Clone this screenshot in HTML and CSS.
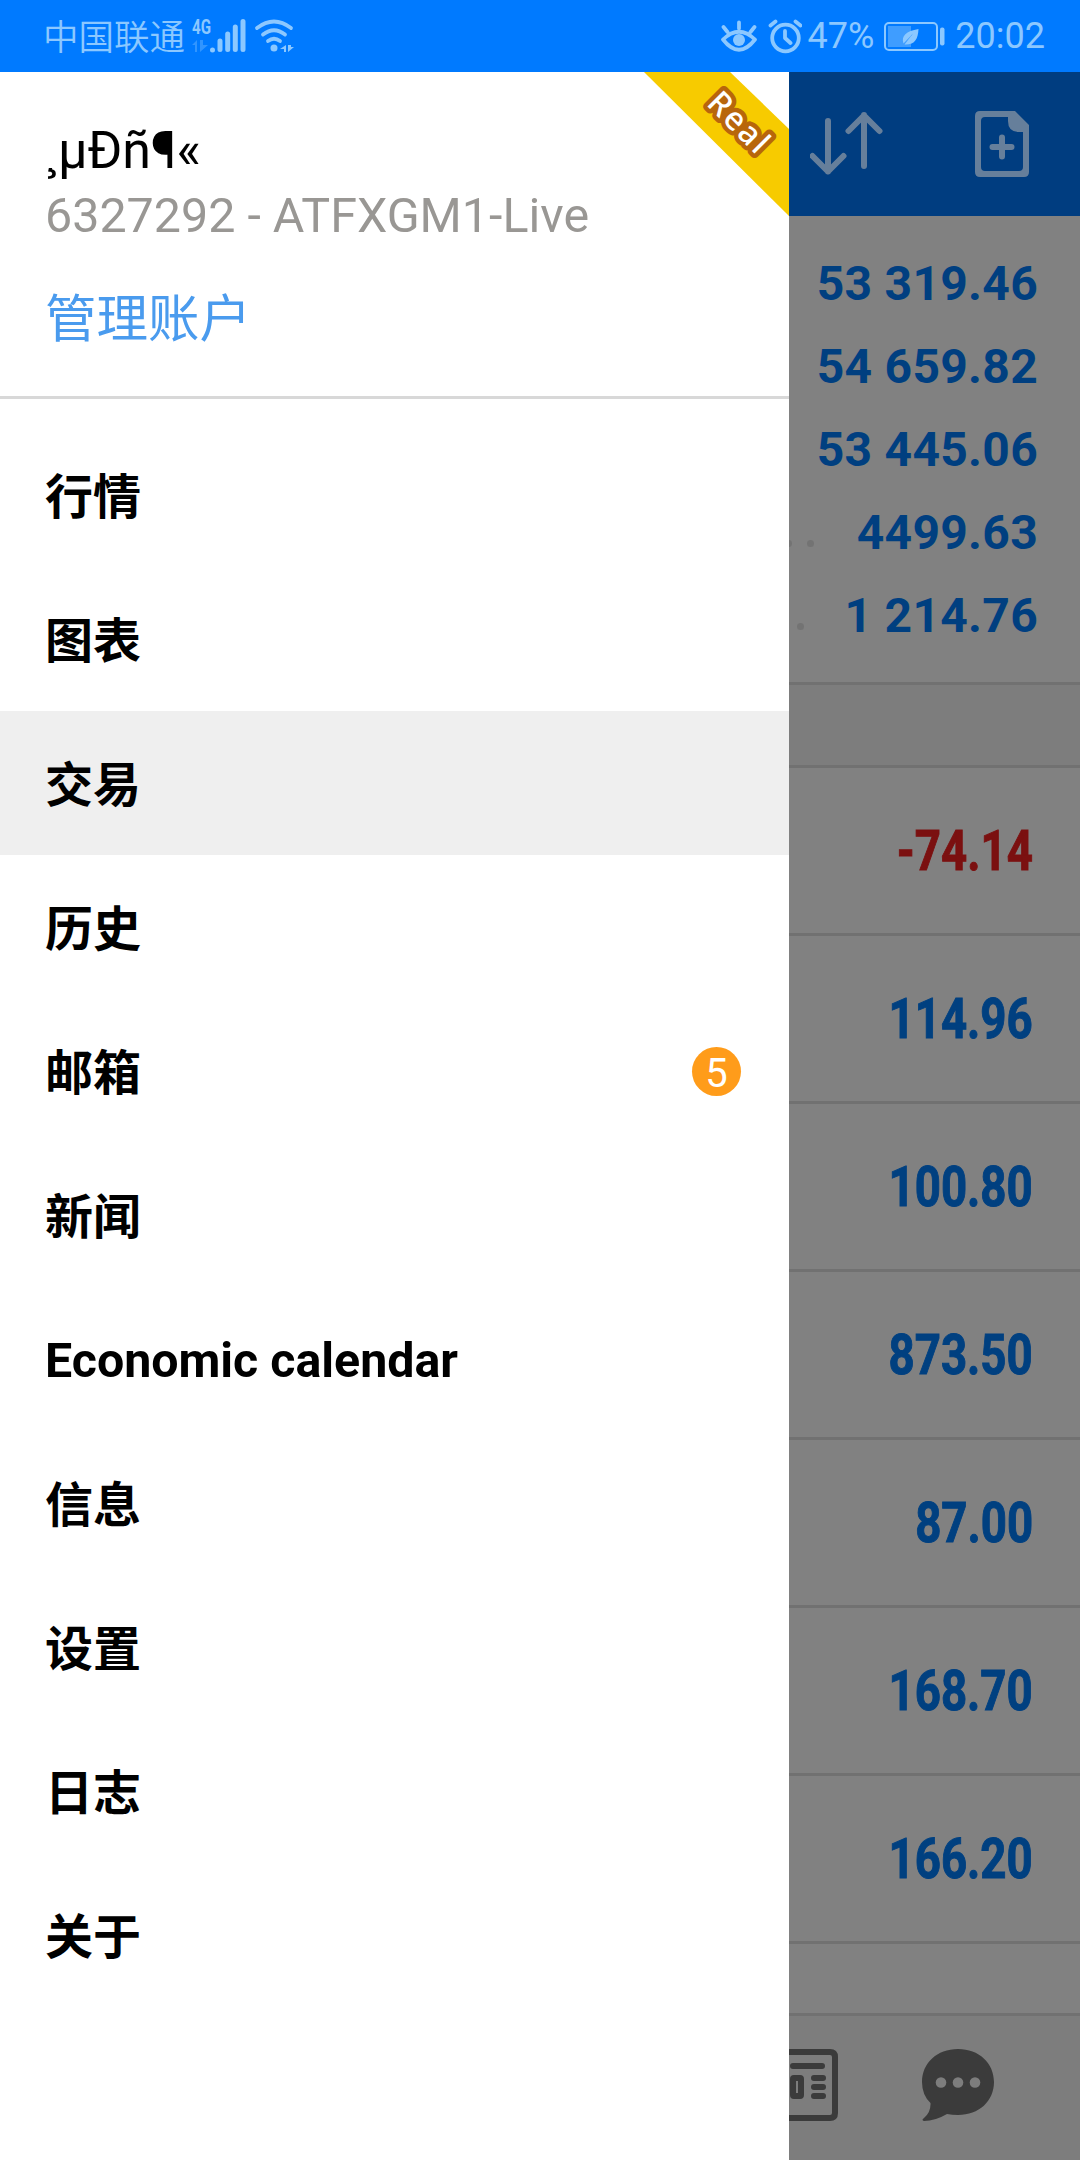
FILE: index.html
```
<!DOCTYPE html>
<html lang="zh-CN">
<head>
  <meta charset="UTF-8">
  <title>交易</title>
  <link rel="stylesheet" href="styles.css">
</head>
<body>
  <header class="status">
    <span class="carrier">中国联通</span>
    <svg class="signal" width="56" height="72" viewBox="190 0 56 72">
      <text x="192" y="33.5" textLength="19" lengthAdjust="spacingAndGlyphs" class="net">4G</text>
      <path class="faint" d="M197 40v12h-2v-7h-3zM200 40v12l8-7h-5v-5z"/>
      <path class="bars" d="M212.500 50v0M220 41v8.500M227.700 34v15.500M235.300 27v22.500M243 21.500v28"/>
    </svg>
    <svg class="wifi" width="42" height="72" viewBox="253 0 42 72">
      <path class="line" d="M257 28Q274 15 291 28M263 34.500Q274 26 285 34.500M268 41Q274 36.500 280 41"/>
      <circle cx="274" cy="48" r="3.500"/>
      <path d="M286 45v7h-2v-3h-4zM288 45v7l6-5h-3v-2z"/>
    </svg>
    <div class="status-right">
      <svg class="eye" width="36" height="72" viewBox="721 0 36 72">
        <path class="line" d="M723 39.500Q739 24 755 39.500Q739 60 723 39.500zM739 22.500v6M723.500 27l4 5M754.500 27l-4 5"/>
        <circle cx="739" cy="40" r="6"/>
      </svg>
      <svg class="alarm" width="34" height="72" viewBox="768 0 34 72">
        <circle class="line" cx="785.500" cy="38" r="13.300"/>
        <path class="line" d="M785 31v7l5.500 5M770.500 25.500l5-4M800.500 25.500l-5-4"/>
      </svg>
      <span class="percent">47%</span>
      <svg class="battery" width="62" height="72" viewBox="883 0 62 72">
        <rect class="frame" x="885" y="23" width="52" height="27" rx="4"/>
        <rect class="level" x="888" y="26" width="23" height="21"/>
        <rect x="940" y="27.500" width="4.500" height="18" rx="2"/>
        <path d="M918.500 29C906 31 901 36 903.500 43.500L913 33.500L904.500 44.500C915 45 918 39 918.500 29z"/>
      </svg>
      <span>20:02</span>
    </div>
  </header>

  <div class="screen">
    <aside class="drawer">
      <svg class="ribbon" width="145" height="144" viewBox="0 0 145 144">
        <path d="M0 0H86L145 57V144z"/>
        <text transform="translate(61.500 32.500) rotate(45)" textLength="72">Real</text>
      </svg>
      <div class="account">
        <div class="name">¸µÐñ¶«</div>
        <div class="login">6327292 - ATFXGM1-Live</div>
        <a class="manage">管理账户</a>
      </div>
      <nav class="menu">
        <a>行情</a>
        <a>图表</a>
        <a class="active">交易</a>
        <a>历史</a>
        <a>邮箱 <span class="badge">5</span></a>
        <a>新闻</a>
        <a class="latin">Economic calendar</a>
        <a>信息</a>
        <a>设置</a>
        <a>日志</a>
        <a>关于</a>
      </nav>
    </aside>

    <main class="trade">
      <div class="toolbar">
        <svg class="sort" width="74" height="68" viewBox="810 110 74 68">
          <path d="M828 121v50.500M812.500 156l15.500 15.500l15.500-15.500M864 166v-51M848.500 131l15.500-15.500l15.500 15.500"/>
        </svg>
        <svg class="new-order" width="54" height="66" viewBox="975 111 54 66">
          <path class="sheet" fill-rule="evenodd" d="M980 111h35l14 14v47q0 5-5 5h-44q-5 0-5-5v-56q0-5 5-5zM985 117q-4 0-4 4v46q0 4 4 4h34q4 0 4-4v-35h-4q-11 0-11-11v-4z"/>
          <path class="plus" d="M992.500 147h19M1002 137.500v19"/>
        </svg>
      </div>
      <div class="summary">
        <div>53 319.46</div>
        <div>54 659.82</div>
        <div>53 445.06</div>
        <div><span class="dots"><i></i><i></i></span>4499.63</div>
        <div><span class="dots last"><i></i></span>1 214.76</div>
      </div>
      <div class="section"></div>
      <div class="positions">
        <div class="loss"><span>-74.14</span></div>
        <div><span>114.96</span></div>
        <div><span>100.80</span></div>
        <div><span>873.50</span></div>
        <div><span>87.00</span></div>
        <div><span>168.70</span></div>
        <div><span>166.20</span></div>
      </div>
      <div class="tabs">
        <svg width="49" height="72" viewBox="789 2049 49 72">
          <path class="page" d="M780 2052h50q5 0 5 5v56q0 5-5 5h-50"/>
          <path class="page" d="M793 2066h29M814 2078h9M814 2087h9M814 2096h9"/>
          <rect class="page" x="793" y="2078" width="8" height="18" rx="1"/>
        </svg>
        <svg class="chat" width="72" height="72" viewBox="0 0 72 72">
          <path d="M36 0C57 0 72 14 72 33C72 52 57 66 36 66Q30 66 25 65Q13 72 2 72Q-1 71 2 69Q9 63 8.500 54Q0 46 0 33C0 14 15 0 36 0z"/>
          <circle cx="19" cy="33.500" r="5.300"/>
          <circle cx="36" cy="33.500" r="5.300"/>
          <circle cx="53" cy="33.500" r="5.300"/>
        </svg>
      </div>
    </main>
  </div>
</body>
</html>
```
FILE: styles.css
```
* {
  box-sizing: border-box;
}
body {
  margin: 0;
  width: 1080px;
  height: 2160px;
  overflow: hidden;
  background-color: #fff;
  font-family: Roboto, "Noto Sans CJK SC", sans-serif;
}
svg {
  display: block;
  flex: none;
}

/* status bar */
.status {
  display: flex;
  align-items: center;
  height: 72px;
  padding: 0 35px 0 43px;
  background-color: #007aff;
  color: #8cc8ff;
  fill: #8cc8ff;
  font-size: 36px;
}
.carrier {
  width: 147px;
  padding-top: 3px;
  font-size: 35.5px;
  font-weight: 350;
  line-height: 72px;
}
.net {
  font-size: 21px;
  font-weight: bold;
}
.faint {
  opacity: 0.35;
}
.bars,
.line {
  fill: none;
  stroke: #8cc8ff;
  stroke-width: 5;
  stroke-linecap: round;
  stroke-linejoin: round;
}
.line {
  stroke-width: 3.8;
}
.wifi {
  margin-left: 7px;
}
.status-right {
  display: flex;
  align-items: center;
  margin-left: auto;
  line-height: 76px;
}
.alarm {
  margin-left: 11px;
}
.percent {
  margin: 0 9px 0 6px;
}
.battery {
  margin-right: 10px;
}
.frame {
  fill: none;
  stroke: #8cc8ff;
  stroke-width: 2;
}
.level {
  opacity: 0.45;
}

.screen {
  display: grid;
  grid-template-columns: 789px 291px;
  height: 2088px;
}

/* drawer */
.drawer {
  position: relative;
  background-color: #fff;
}
.ribbon {
  position: absolute;
  top: 0;
  right: 0;
  fill: #f7cb00;
}
.ribbon text {
  font-family: "Noto Sans", sans-serif;
  font-size: 32px;
  font-weight: 500;
  fill: #fff;
  stroke: #b8660b;
  stroke-width: 9;
  stroke-linejoin: round;
  paint-order: stroke;
}
.account {
  height: 327px;
  padding: 46px 46px 0 45px;
  border-bottom: 3px solid #d8d8d8;
}
.name {
  font-size: 52px;
  line-height: 66px;
}
.login {
  color: #999794;
  font-size: 48.4px;
  line-height: 64px;
}
.manage {
  display: block;
  margin-top: 34px;
  color: #4a9bee;
  font-size: 51.5px;
  line-height: 76px;
}
.menu {
  padding-top: 24px;
}
.menu a {
  display: flex;
  align-items: center;
  justify-content: space-between;
  height: 144px;
  padding: 0 48px 5px 45px;
  font-size: 48px;
  font-weight: bold;
}
.menu .latin {
  padding-top: 2px;
  padding-bottom: 0;
  font-size: 48.3px;
}
.menu .active {
  background-color: #efefef;
}
.badge {
  width: 49px;
  height: 49px;
  margin-top: 5px;
  border-radius: 50%;
  background-color: #ff9c1a;
  color: #fff;
  font-size: 40px;
  font-weight: normal;
  line-height: 54px;
  text-align: center;
}

/* dimmed trade screen */
.trade {
  display: flex;
  flex-direction: column;
  overflow: hidden;
  background-color: #818181;
  color: #003f80;
}
.toolbar {
  display: flex;
  align-items: center;
  justify-content: space-between;
  height: 144px;
  padding: 0 51px 0 21px;
  background-color: #003d80;
}
.sort path,
.plus {
  fill: none;
  stroke: #667f9b;
  stroke-width: 6;
  stroke-linecap: round;
  stroke-linejoin: round;
}
.sheet {
  fill: #667f9b;
}
.summary {
  height: 469px;
  padding-top: 26px;
  border-bottom: 3px solid #717171;
  font-size: 48px;
  font-weight: bold;
  letter-spacing: 0.3px;
}
.summary div {
  display: flex;
  justify-content: flex-end;
  height: 83px;
  padding-right: 42px;
  line-height: 83px;
}
.dots {
  display: flex;
  gap: 15px;
  margin-right: auto;
  margin-left: -4px;
  padding-top: 49px;
}
.dots.last {
  margin-left: 8px;
}
.dots i {
  width: 7px;
  height: 7px;
  border-radius: 50%;
  background-color: #737373;
}
.section {
  height: 83px;
  border-bottom: 3px solid #717171;
  background-color: #7d7d7d;
}
.positions div {
  height: 168px;
  padding-right: 47px;
  border-bottom: 3px solid #717171;
  color: #004080;
  font-size: 55px;
  font-weight: bold;
  line-height: 166px;
  text-align: right;
}
.positions span {
  display: inline-block;
  transform: scaleX(0.83);
  transform-origin: right;
  -webkit-text-stroke: 1px currentColor;
}
.positions .loss {
  color: #7b1010;
}
.tabs {
  display: flex;
  align-items: center;
  justify-content: space-between;
  height: 147px;
  margin-top: auto;
  padding-right: 86px;
  padding-bottom: 6px;
  border-top: 3px solid #717171;
  background-color: #7d7d7d;
}
.page {
  fill: none;
  stroke: #3b3b3b;
  stroke-width: 6;
  stroke-linecap: round;
}
.chat {
  fill: #3b3b3b;
}
.chat circle {
  fill: #7d7d7d;
}
```
